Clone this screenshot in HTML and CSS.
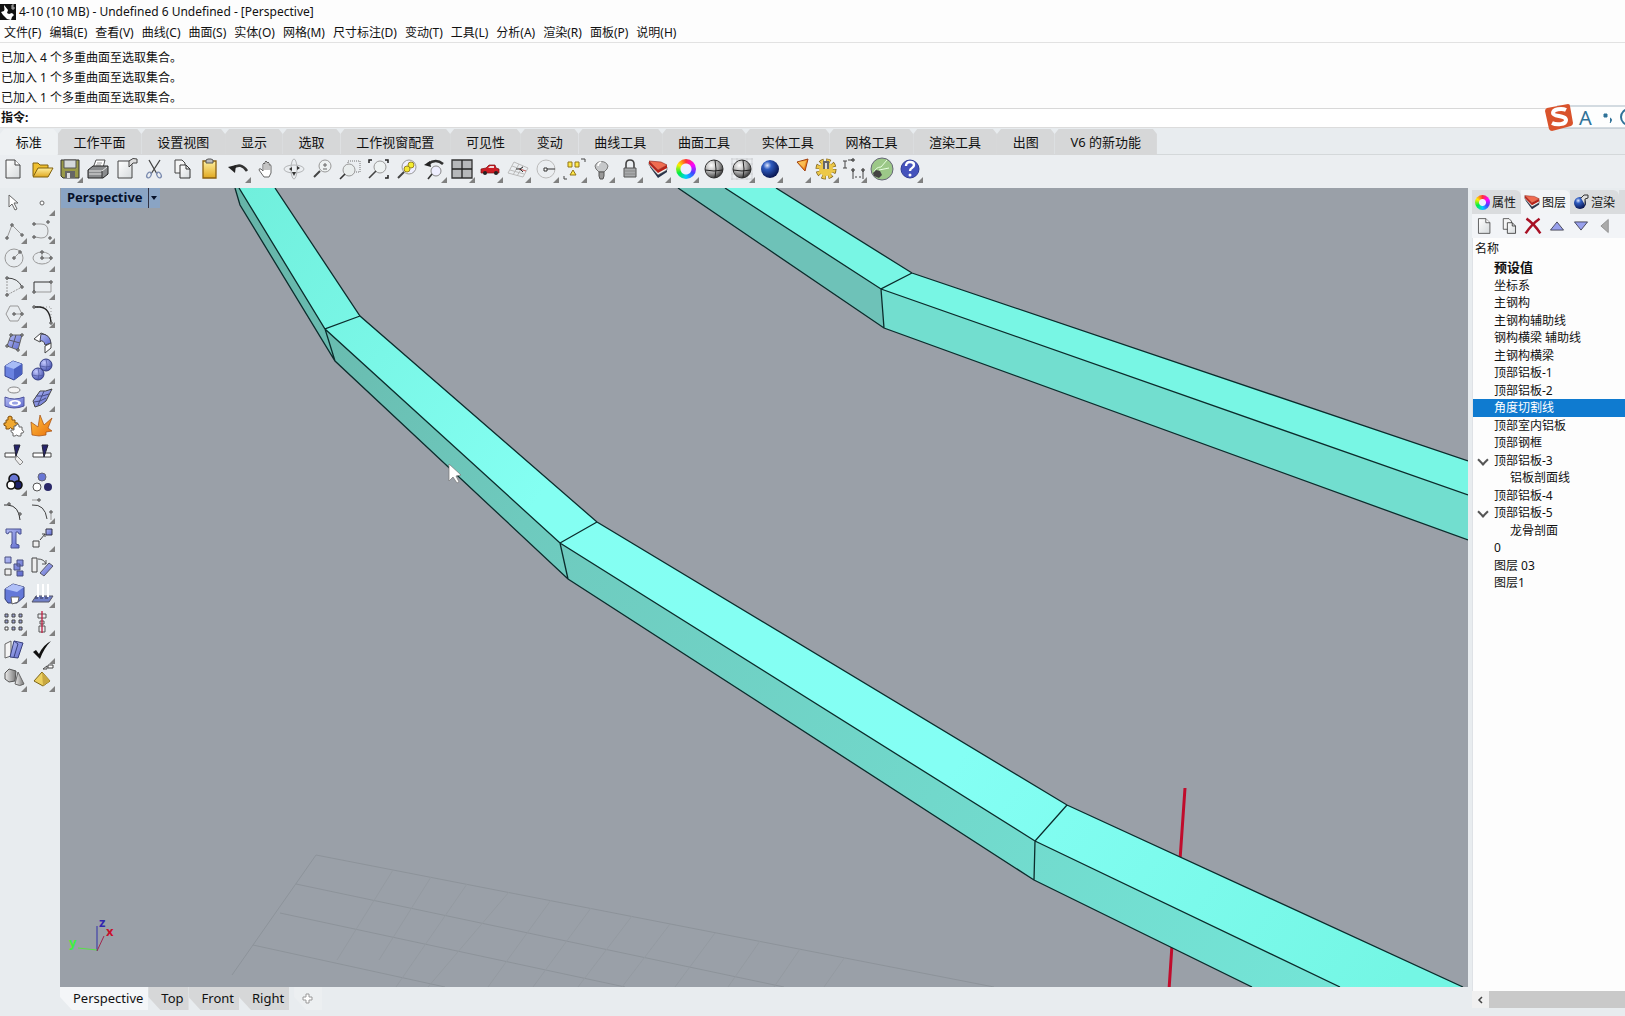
FILE: index.html
```html
<!DOCTYPE html>
<html lang="zh-CN">
<head>
  <meta charset="UTF-8" />
  <meta name="viewport" content="width=device-width, initial-scale=1.0"/>
  <title>4-10 (10 MB) - Undefined 6 Undefined - [Perspective]</title>
  <link rel="stylesheet" href="styles.css">
</head>

<body>
  <!-- shared gradients and symbols -->
  <svg class="defs" aria-hidden="true">
    <defs>
      <linearGradient id="blue" x1="0" y1="0" x2="1" y2="1"><stop offset="0" stop-color="#b4bcf4"/><stop offset="1" stop-color="#5c68cc"/></linearGradient>
      <linearGradient id="paper" x1="0" y1="0" x2="1" y2="1"><stop offset="0" stop-color="#fff"/><stop offset="1" stop-color="#d6dadc"/></linearGradient>
      <linearGradient id="gold" x1="0" y1="0" x2="0" y2="1"><stop offset="0" stop-color="#fff0a0"/><stop offset="1" stop-color="#e0a820"/></linearGradient>
      <linearGradient id="orange" x1="0" y1="0" x2="1" y2="1"><stop offset="0" stop-color="#ffc040"/><stop offset="1" stop-color="#e8700c"/></linearGradient>
      <linearGradient id="metal" x1="0" y1="0" x2="1" y2="0"><stop offset="0" stop-color="#eee"/><stop offset="1" stop-color="#777"/></linearGradient>
      <radialGradient id="ballGrey" cx=".35" cy=".3" r=".8"><stop offset="0" stop-color="#fff"/><stop offset=".5" stop-color="#aaa"/><stop offset="1" stop-color="#222"/></radialGradient>
      <radialGradient id="ballBlue" cx=".35" cy=".3" r=".75"><stop offset="0" stop-color="#dfe8ff"/><stop offset=".3" stop-color="#2f5cc0"/><stop offset="1" stop-color="#061048"/></radialGradient>
      <radialGradient id="ballSoft" cx=".35" cy=".3" r=".8"><stop offset="0" stop-color="#c4caff"/><stop offset="1" stop-color="#3c48a8"/></radialGradient>
    </defs>
    <symbol id="i-new" viewBox="0 0 28 28"><path d="M6 5h9l5 5v13H6z" fill="url(#paper)" stroke="#444"/><path d="M15 5v5h5" fill="#fff" stroke="#444"/></symbol>
    <symbol id="i-copy" viewBox="0 0 28 28"><path d="M7 5h7l3 3v10H7z" fill="#f5f5f5" stroke="#444"/><path d="M12 10h6l4 4v9H12z" fill="url(#paper)" stroke="#333"/><path d="M18 10v4h4" fill="none" stroke="#333"/></symbol>
    <symbol id="i-layers" viewBox="0 0 28 28"><path d="M6 12l8 11 9-6v-4l-9 5-8-8z" fill="#28334a"/><path d="M5 10l9 10 9-5v-3l-9 4-9-9z" fill="#f4f4f4" stroke="#555" stroke-width=".6"/><path d="M5 6l9 9 9-5v3l-9 5-9-9z" fill="#b82218"/><path d="M5 6l12 1 6 3-9 5z" fill="#f06c50" stroke="#8a2018" stroke-width=".6"/></symbol>
    <symbol id="i-ball" viewBox="0 0 28 28"><circle cx="14" cy="14" r="9" fill="url(#ballGrey)" stroke="#333"/><path d="M5 15q9 2 18 0M15 5q2 9 0 18" stroke="#222" fill="none"/></symbol>
  </svg>

  <header class="titlebar">
    <svg class="logo" viewBox="0 0 16 16"><path d="M0 0h16v16H0z" fill="#111"/><path d="M4 1c0 3 1 4 0 6l-3 1 2 3 4 4 4 1 1-3 2-2-2-2-3 1-2-1 1-3z" fill="#fff"/><path d="M14 1h-2v4h2V3h-2" fill="none" stroke="#ddd" stroke-width=".8"/></svg>
    <h1>4-10 (10 MB) - Undefined 6 Undefined - [Perspective]</h1>
  </header>

  <nav class="menu">
    <button>文件(F)</button>
    <button>编辑(E)</button>
    <button>查看(V)</button>
    <button>曲线(C)</button>
    <button>曲面(S)</button>
    <button>实体(O)</button>
    <button>网格(M)</button>
    <button>尺寸标注(D)</button>
    <button>变动(T)</button>
    <button>工具(L)</button>
    <button>分析(A)</button>
    <button>渲染(R)</button>
    <button>面板(P)</button>
    <button>说明(H)</button>
  </nav>

  <section class="log">
    <p>已加入 4 个多重曲面至选取集合。</p>
    <p>已加入 1 个多重曲面至选取集合。</p>
    <p>已加入 1 个多重曲面至选取集合。</p>
  </section>

  <div class="command">
    <label for="cmd">指令:</label>
    <input type="text" id="cmd">
    <!-- input method bar -->
    <div class="ime">
      <svg viewBox="0 0 80 30">
        <path d="M12 4h70v22H12" fill="#fdfefe" stroke="#a9b8c4"/>
        <path d="M2 6l21-4q2 0 2 2l3 17q0 2-2 3L7 29q-2 0-3-2L0 9q0-2 2-3z" fill="#d9532c"/>
        <path d="M21 8c-4-2-13-1-13 3s13 2 13 7-10 5-14 3" fill="none" stroke="#fff" stroke-width="4"/>
        <path d="M59 12h3v3h-3zM65 16q3 1 0 5" fill="#2f7298" stroke="#2f7298"/>
        <circle cx="84" cy="15" r="8" fill="none" stroke="#2f7298" stroke-width="2"/>
      </svg>
      <span>A</span>
    </div>
  </div>

  <nav class="tabs">
    <div class="tab-list">
      <button class="active">标准</button>
      <button>工作平面</button>
      <button>设置视图</button>
      <button>显示</button>
      <button>选取</button>
      <button>工作视窗配置</button>
      <button>可见性</button>
      <button>变动</button>
      <button>曲线工具</button>
      <button>曲面工具</button>
      <button>实体工具</button>
      <button>网格工具</button>
      <button>渲染工具</button>
      <button>出图</button>
      <button>V6 的新功能</button>
    </div>
  </nav>

  <div class="toolbar">
    <button class="tool" aria-label="新建"><svg viewBox="0 0 28 28"><use href="#i-new"/></svg></button>
    <button class="tool" aria-label="打开"><svg viewBox="0 0 28 28"><path d="M5 21V8h5l2 2h8v4" fill="#f0c030" stroke="#80600c"/><path d="M5 22l5-9h15l-5 9z" fill="url(#gold)" stroke="#80600c"/></svg></button>
    <button class="tool more" aria-label="保存"><svg viewBox="0 0 28 28"><path d="M5 5h18v18H7l-2-2z" fill="#9a9a48" stroke="#333"/><path d="M8 5h12v8H8z" fill="#d4d8da" stroke="#555"/><path d="M9 16h10v7H9z" fill="#666"/><path d="M11 18h3v5h-3z" fill="#ddd"/></svg></button>
    <button class="tool" aria-label="打印"><svg viewBox="0 0 28 28"><path d="M9 13l3-8h9l-2 8z" fill="#fff" stroke="#555"/><path d="M13 8h5M12 10h5" stroke="#999"/><path d="M4 15l5-4h15v8l-5 4H4z" fill="#8a8c8e" stroke="#222"/><path d="M5 16h13l5-4M5 19h13" fill="none" stroke="#e4e4e4"/><path d="M18 16v7" stroke="#333"/></svg></button>
    <button class="tool" aria-label="文件属性"><svg viewBox="0 0 28 28"><path d="M6 6h13l1 4v13H6z" fill="url(#paper)" stroke="#444"/><path d="M17 6q4-4 8-2v4h-4l-4 4z" fill="#ddd" stroke="#444"/></svg></button>
    <button class="tool" aria-label="剪切"><svg viewBox="0 0 28 28"><path d="M9 5l8 14M20 5l-9 14" stroke="#444" stroke-width="1.3"/><ellipse cx="9" cy="20" rx="2" ry="3" transform="rotate(30 9 20)" fill="none" stroke="#7c8cb0" stroke-width="1.3"/><ellipse cx="19" cy="20" rx="2" ry="3" transform="rotate(-30 19 20)" fill="none" stroke="#7c8cb0" stroke-width="1.3"/></svg></button>
    <button class="tool" aria-label="复制"><svg viewBox="0 0 28 28"><use href="#i-copy"/></svg></button>
    <button class="tool" aria-label="粘贴"><svg viewBox="0 0 28 28"><path d="M7 6h13v17H7z" fill="url(#gold)" stroke="#8a6010" stroke-width="1.3"/><path d="M10 8V5l2-1h3l2 1v3z" fill="#bbb" stroke="#555"/></svg></button>
    <button class="tool more" aria-label="撤销"><svg viewBox="0 0 28 28"><path d="M9 13q8-6 14 3" fill="none" stroke="#333" stroke-width="2.6"/><path d="M4 12l8-2-1 8z" fill="#222"/></svg></button>
    <button class="tool" aria-label="平移"><svg viewBox="0 0 28 28"><path d="M12 22l-5-7q0-2 2-1l2 2V9q1-2 2 0V7q1-2 2 0v1q1-2 2 0v2q2-1 2 1v7l-2 4z" fill="#fff" stroke="#666"/><path d="M13 9v6M15 8v7M17 10v5" stroke="#888"/></svg></button>
    <button class="tool" aria-label="旋转视图"><svg viewBox="0 0 28 28"><ellipse cx="14" cy="14" rx="10" ry="4" fill="none" stroke="#b4b6b8"/><ellipse cx="14" cy="14" rx="3" ry="10" fill="none" stroke="#b4b6b8"/><path d="M9 14l3-2v4zM20 13l-3-2v4zM12 17h4l-2 4z" fill="#333"/></svg></button>
    <button class="tool" aria-label="缩放"><svg viewBox="0 0 28 28"><circle cx="17" cy="11" r="6" fill="#eef2f2" stroke="#999"/><path d="M12 16l-6 6" stroke="#444" stroke-width="2"/><path d="M15 10h4M17 8v4M15 14h4" stroke="#666"/></svg></button>
    <button class="tool" aria-label="框选缩放"><svg viewBox="0 0 28 28"><path d="M12 6h12v11H12z" fill="none" stroke="#777" stroke-dasharray="1 1"/><circle cx="13" cy="15" r="6" fill="#e9eded" stroke="#999"/><path d="M9 19l-5 5" stroke="#333" stroke-width="1.6"/></svg></button>
    <button class="tool" aria-label="缩放至最大范围"><svg viewBox="0 0 28 28"><path d="M5 8V5h3M21 5h3v3M24 20v3h-3" fill="none" stroke="#222" stroke-width="1.5"/><circle cx="16" cy="12" r="6" fill="#eef2f2" stroke="#999"/><path d="M12 16l-7 7" stroke="#444" stroke-width="1.6"/></svg></button>
    <button class="tool" aria-label="缩放至选取物件"><svg viewBox="0 0 28 28"><circle cx="17" cy="12" r="7" fill="#eef" stroke="#999"/><path d="M12 17l-6 6" stroke="#444" stroke-width="2"/><circle cx="19" cy="10" r="3" fill="#f4ee30" stroke="#988420"/><circle cx="15" cy="14" r="3" fill="#f4e830" stroke="#988420"/></svg></button>
    <button class="tool more" aria-label="恢复视图"><svg viewBox="0 0 28 28"><path d="M8 9q8-6 15 0" fill="none" stroke="#333" stroke-width="2.6"/><path d="M4 10l6-4 1 6z" fill="#222"/><circle cx="16" cy="16" r="5" fill="#eef" stroke="#888"/><path d="M12 19l-4 5" stroke="#333" stroke-width="1.6"/></svg></button>
    <button class="tool more" aria-label="四个视图"><svg viewBox="0 0 28 28"><path d="M4 5h20v18H4z" fill="#b6b8ba" stroke="#333" stroke-width="1.3"/><path d="M14 5v18M4 14h20" stroke="#222" stroke-width="1.3"/></svg></button>
    <button class="tool more" aria-label="汽车视图"><svg viewBox="0 0 28 28"><path d="M5 14l5-1 3-3h6l1 3 3 1v4H5z" fill="#cc1c24" stroke="#7c0c10" stroke-width=".7"/><path d="M12 13l2-2h4v2z" fill="#f0d8d8"/><circle cx="9" cy="18" r="2" fill="#222"/><circle cx="20" cy="18" r="2" fill="#222"/></svg></button>
    <button class="tool more" aria-label="工作平面"><svg viewBox="0 0 28 28"><path d="M10 7l14 6-5 9-15-4zM8 11l14 5M6 15l14 4M15 9l-6 11M19 11l-6 10" fill="none" stroke="#bbb"/><path d="M15 14l7 2" stroke="#c66"/><path d="M12 14h4l3 3M16 14l3-2" fill="none" stroke="#333"/></svg></button>
    <button class="tool more" aria-label="圆"><svg viewBox="0 0 28 28"><circle cx="14" cy="14" r="9" fill="none" stroke="#bbb"/><path d="M14 14h9" stroke="#333"/><path d="M12 13h3v3h-3z" fill="#fff" stroke="#333"/></svg></button>
    <button class="tool more" aria-label="选取"><svg viewBox="0 0 28 28"><path d="M8 7h4v5H8zM15 7h4v5h-4zM13 15l3 5h-6z" fill="#ffe848" stroke="#907418"/><path d="M21 4h4v3M4 21v3h3" fill="none" stroke="#444"/></svg></button>
    <button class="tool more" aria-label="隐藏"><svg viewBox="0 0 28 28"><path d="M11 17q-4-3-4-6a7 7 0 0 1 13 0q0 3-4 6z" fill="#c6c8ca" stroke="#777"/><path d="M11 17h5v4l-1 3h-3l-1-3z" fill="#999" stroke="#555"/><path d="M10 11q0-3 3-4" fill="none" stroke="#fff" stroke-width="1.5"/></svg></button>
    <button class="tool more" aria-label="锁定"><svg viewBox="0 0 28 28"><path d="M10 13V9q0-4 4-4t4 4v4" fill="none" stroke="#444" stroke-width="1.6"/><path d="M8 13h12v9H8z" fill="#a8aaac" stroke="#555"/><path d="M9 16h10M9 19h10" stroke="#888"/></svg></button>
    <button class="tool more" aria-label="图层"><svg viewBox="0 0 28 28"><use href="#i-layers"/></svg></button>
    <button class="tool more" aria-label="属性"><span class="wheel"></span></button>
    <button class="tool" aria-label="着色"><svg viewBox="0 0 28 28"><use href="#i-ball"/></svg></button>
    <button class="tool more" aria-label="着色全部"><svg viewBox="0 0 28 28"><path d="M3 4h22M3 9h22M3 19h22M3 24h22M4 3v22M9 3v22M19 3v22M24 3v22" stroke="#c4c6c8" stroke-width=".7"/><use href="#i-ball"/></svg></button>
    <button class="tool more" aria-label="渲染"><svg viewBox="0 0 28 28"><circle cx="14" cy="14" r="9" fill="url(#ballBlue)"/></svg></button>
    <button class="tool more" aria-label="聚光灯"><svg viewBox="0 0 28 28"><path d="M13 7l11-3-3 12z" fill="url(#orange)" stroke="#a04010"/><path d="M14 7l8-1-2 7" fill="#ffe080" opacity=".5"/></svg></button>
    <button class="tool more" aria-label="选项"><svg viewBox="0 0 28 28"><circle cx="14" cy="14" r="8" fill="none" stroke="#80641c" stroke-width="5" stroke-dasharray="4 2.28"/><circle cx="14" cy="14" r="8" fill="none" stroke="#ecc848" stroke-width="3.4" stroke-dasharray="3 3.28" stroke-dashoffset="-.5"/><circle cx="14" cy="14" r="7" fill="#ecc848"/><path d="M11 6h6v8h-6z" fill="#666"/><path d="M13 8h2v6h-2z" fill="#ddd"/></svg></button>
    <button class="tool more" aria-label="尺寸标注"><svg viewBox="0 0 28 28"><path d="M5 6v7M3 6h4M3 13h4M8 5h5M13 16v8M23 16v8M15 22h2M19 22h2" fill="none" stroke="#444"/><path d="M12 4h2v2h-2zM12 14h2v2h-2zM22 14h2v2h-2z" fill="#fff" stroke="#222"/></svg></button>
    <button class="tool" aria-label="Grasshopper"><svg viewBox="0 0 28 28"><circle cx="14" cy="14" r="11" fill="#9cc888" stroke="#667"/><path d="M6 17q2-5 7-5l6-7M11 15l10-2" fill="none" stroke="#e8ffe0"/><path d="M5 18l3-3 4 1 2 4-3 3-5-2z" fill="#444"/></svg></button>
    <button class="tool more" aria-label="说明"><svg viewBox="0 0 28 28"><circle cx="14" cy="14" r="9" fill="#4452bc" stroke="#303c94"/><path d="M10 11q0-4 4-4t4 3q0 2-2 3t-2 3" fill="none" stroke="#fff" stroke-width="2.4"/><circle cx="14" cy="20" r="1.5" fill="#fff"/></svg></button>
  </div>

  <main class="workspace">
    <aside class="side">
      <button class="tool" aria-label="取消"><svg viewBox="0 0 28 28"><path d="M9 7v12l3-3 3 6 2-1-3-6h4z" fill="#fff" stroke="#666"/></svg></button>
      <button class="tool more" aria-label="点"><svg viewBox="0 0 28 28"><circle cx="14" cy="15" r="2" fill="#fff" stroke="#666"/></svg></button>

      <button class="tool more" aria-label="多重直线"><svg viewBox="0 0 28 28"><path class="ln" d="M7 22l5-13 10 10"/><path class="pt" d="M6 21h2v2H6zM11 8h2v2h-2zM21 18h2v2h-2z"/></svg></button>
      <button class="tool more" aria-label="曲线"><svg viewBox="0 0 28 28"><path class="ln" d="M7 8h6q7 0 7 7t-7 7l-6-1"/><path class="pt" d="M5 7h2v2H5zM19 5h2v2h-2zM5 20h2v2H5zM21 21h2v2h-2z"/></svg></button>

      <button class="tool more" aria-label="圆"><svg viewBox="0 0 28 28"><circle class="ln" cx="14" cy="14" r="9"/><path class="ln" d="M14 14l6-6"/><path class="pt" d="M13 13h2v2h-2zM19 7h2v2h-2z"/></svg></button>
      <button class="tool more" aria-label="椭圆"><svg viewBox="0 0 28 28"><ellipse class="ln" cx="14" cy="14" rx="9" ry="6"/><path class="ln" d="M14 8v6h9"/><path class="pt" d="M13 13h2v2h-2zM13 7h2v2h-2zM22 13h2v2h-2z"/></svg></button>

      <button class="tool more" aria-label="圆弧"><svg viewBox="0 0 28 28"><path class="ln" d="M7 6v17l15-8" stroke-dasharray="2 1"/><path d="M7 6q11 0 15 9" fill="none" stroke="#444"/><path class="pt" d="M6 5h2v2H6zM6 22h2v2H6zM21 14h2v2h-2z"/></svg></button>
      <button class="tool more" aria-label="矩形"><svg viewBox="0 0 28 28"><path d="M6 20V10h17" fill="none" stroke="#333"/><path class="ln" d="M23 10v10H6"/><path class="pt" d="M5 19h2v2H5zM22 9h2v2h-2z"/></svg></button>

      <button class="tool more" aria-label="多边形"><svg viewBox="0 0 28 28"><path class="ln" d="M6 14l4-8h8l4 8-4 7h-8zM14 14h8"/><path class="pt" d="M13 13h2v2h-2zM21 13h2v2h-2z"/></svg></button>
      <button class="tool more" aria-label="圆角"><svg viewBox="0 0 28 28"><path class="ln" d="M6 7h17v16" stroke-dasharray="1 2"/><path d="M6 7h6q10 1 11 16" fill="none" stroke="#222" stroke-width="1.3"/><path class="pt" d="M5 6h2v2H5zM22 22h2v2h-2z"/></svg></button>

      <button class="tool more" aria-label="曲面"><svg viewBox="0 0 28 28"><path d="M11 7h11l-4 15-11-4z" fill="url(#blue)" stroke="#666"/><path d="M9 12l11 3M16 7l-4 13" stroke="#556"/><path class="pt" d="M10 6h2v2h-2zM21 6h2v2h-2zM6 17h2v2H6zM17 21h2v2h-2z"/></svg></button>
      <button class="tool more" aria-label="曲面圆角"><svg viewBox="0 0 28 28"><path d="M6 11l7-6 5 2-6 7z" fill="#fff" stroke="#444"/><path d="M13 6q9 0 10 9l-6 2q-1-5-5-4z" fill="url(#blue)" stroke="#445"/><path d="M17 18l6-3v5l-6 5z" fill="#fff" stroke="#444"/></svg></button>

      <button class="tool more" aria-label="立方体"><svg viewBox="0 0 28 28"><path d="M5 10l8-5 9 3v10l-8 6-9-4z" fill="#6a82e0" stroke="#33418e"/><path d="M5 10l8-5 9 3-8 5z" fill="#a8bcf6"/><path d="M14 13l8-5v10l-8 6z" fill="#4a60c0"/></svg></button>
      <button class="tool more" aria-label="布尔运算"><svg viewBox="0 0 28 28"><circle cx="18" cy="9" r="6" fill="url(#ballSoft)" stroke="#333c80"/><circle cx="10" cy="18" r="6" fill="url(#ballSoft)" stroke="#333c80"/><path d="M12 10q6 2 12 0M18 3q2 6 0 12M4 19q6 2 12 0M10 12q2 6 0 12" fill="none" stroke="#4a559c" stroke-width=".7"/></svg></button>

      <button class="tool more" aria-label="投影"><svg viewBox="0 0 28 28"><ellipse cx="14" cy="6" rx="6" ry="3" fill="#f4f4f4" stroke="#888"/><path d="M5 13q9 4 19 0v9q-10 4-19 0z" fill="url(#blue)" stroke="#4c529c"/><ellipse cx="15" cy="19" rx="6" ry="3" fill="#fff"/><ellipse cx="15" cy="19" rx="3" ry="1.5" fill="#98a2e4"/></svg></button>
      <button class="tool more" aria-label="网格"><svg viewBox="0 0 28 28"><path d="M5 17l7-10q5 1 12-2l-6 12q-5 5-11 6z" fill="url(#blue)" stroke="#444"/><path d="M8 12q6 1 13-2M6 18q6 0 12-4M16 7l-6 14" fill="none" stroke="#444a80"/></svg></button>

      <button class="tool" aria-label="组合"><svg viewBox="0 0 28 28"><path d="M6 8h2q-1-4 2-4t2 4h3v3q3-1 3 1t-3 2v3h-3q-1-3-3 0H6v-3q-3 0-2-3h2z" fill="#f0a830" stroke="#805010"/><path d="M14 14h2q0-3 3-1v2h3v3q3 1 1 3h-2v3h-3q-1-2-3 0h-2v-3q-3-1-2-3h3z" fill="#fff" stroke="#666"/></svg></button>
      <button class="tool" aria-label="炸开"><svg viewBox="0 0 28 28"><path d="M3 10l7 5 2-12 4 10 8-7-4 10 4 3-6 1v3l-7 1-7-1z" fill="url(#orange)" stroke="#a04c10" stroke-width=".7"/></svg></button>

      <button class="tool" aria-label="修剪"><svg viewBox="0 0 28 28"><path d="M5 13h11v4H5z" fill="#fff" stroke="#444"/><path d="M17 16l6 6-3 3-5-6z" fill="#eee" stroke="#888"/><path d="M14 5h6l-4 11z" fill="#26246c" stroke="#223"/></svg></button>
      <button class="tool" aria-label="分割"><svg viewBox="0 0 28 28"><path d="M5 13h18v4H5z" fill="#fff" stroke="#444"/><path d="M14 5h6l-4 12z" fill="#26246c" stroke="#223"/></svg></button>

      <button class="tool more" aria-label="群组"><svg viewBox="0 0 28 28"><circle cx="14" cy="11" r="5" fill="#6876d4" stroke="#111" stroke-width="1.6"/><circle cx="18" cy="17" r="4" fill="#1c2068" stroke="#111" stroke-width="1.6"/><circle cx="11" cy="17" r="4" fill="#fff" stroke="#111" stroke-width="1.6"/></svg></button>
      <button class="tool" aria-label="解散群组"><svg viewBox="0 0 28 28"><circle cx="14" cy="9" r="4" fill="#6876d4" stroke="#667"/><circle cx="20" cy="19" r="4" fill="#2a2868"/><circle cx="9" cy="19" r="4" fill="#fff" stroke="#555"/></svg></button>

      <button class="tool" aria-label="编辑点"><svg viewBox="0 0 28 28"><path d="M4 9h4q11 1 12 15" fill="none" stroke="#333"/><path class="pt" d="M8 7h2v2H8zM19 17h2v2h-2z"/></svg></button>
      <button class="tool more" aria-label="控制点"><svg viewBox="0 0 28 28"><path d="M4 9q13-1 15 14" fill="none" stroke="#444"/><path class="ln" d="M4 4h6M23 18v6"/><path class="pt" d="M10 3h2v2h-2zM22 15h2v2h-2z"/></svg></button>

      <button class="tool" aria-label="文字"><svg viewBox="0 0 28 28"><path d="M6 5h15v5h-2l-1-2h-2v12l3 1v3h-8v-3l1-1V8H9l-1 2-2-1z" fill="url(#blue)" stroke="#4a5290"/></svg></button>
      <button class="tool more" aria-label="移动"><svg viewBox="0 0 28 28"><path d="M12 16l5-6M14 10h3v3" fill="none" stroke="#444"/><path d="M5 17h6v6H5z" fill="#eee" stroke="#444"/><path d="M18 5h6v6h-6z" fill="url(#blue)" stroke="#334"/></svg></button>

      <button class="tool" aria-label="复制物件"><svg viewBox="0 0 28 28"><path d="M5 5h6v6H5zM17 8h6v6h-6zM14 12h6v6h-6zM17 19h6v5h-6z" fill="url(#blue)" stroke="#4a5080"/><path d="M5 17h6v6H5z" fill="#eee" stroke="#444"/></svg></button>
      <button class="tool" aria-label="旋转"><svg viewBox="0 0 28 28"><path d="M4 6h5v14H4z" fill="#eee" stroke="#444"/><path d="M10 7q6 0 8 5M18 8v4h-4" fill="none" stroke="#555"/><path d="M12 21l9-10 4 3-9 10z" fill="url(#blue)" stroke="#556"/></svg></button>

      <button class="tool more" aria-label="实体"><svg viewBox="0 0 28 28"><path d="M5 9l8-5 11 3v10l-7 6H8l-3-4z" fill="#6478d8" stroke="#333c70"/><path d="M5 9l8-5 11 3-7 5z" fill="#b0c0f8"/><path d="M11 17h8l-1 5-6 2z" fill="#fff" stroke="#666"/></svg></button>
      <button class="tool more" aria-label="曲面投影"><svg viewBox="0 0 28 28"><path d="M8 16h17l-4 6H4z" fill="#7080c8" stroke="#556"/><path d="M10 4v13M15 4v13M20 4v13" stroke="#fff" stroke-width="2"/><path d="M7 18h15" stroke="#335" stroke-dasharray="3 2"/></svg></button>

      <button class="tool more" aria-label="阵列"><svg viewBox="0 0 28 28"><path d="M5 6h3v3H5zM12 6h3v3h-3zM19 6h3v3h-3zM5 12h3v3H5zM12 12h3v3h-3zM19 12h3v3h-3zM12 19h3v3h-3zM19 19h3v3h-3z" fill="#98a0d0" stroke="#444"/><path d="M5 19h3v3H5z" fill="#fff" stroke="#444"/></svg></button>
      <button class="tool more" aria-label="对齐"><svg viewBox="0 0 28 28"><path d="M10 6h8v4h-8zM12 13h4v3h-4zM11 18h6v6h-6z" fill="none" stroke="#555"/><path d="M14 3v22" stroke="#c01c40" stroke-width="1.3"/></svg></button>

      <button class="tool more" aria-label="变形"><svg viewBox="0 0 28 28"><path d="M5 8l6-3v15l-6 2z" fill="#f4f4f4" stroke="#666"/><path d="M14 5l9 2-5 15-8-1z" fill="url(#blue)" stroke="#38407c"/><path d="M14 5l4 3-4 13" fill="none" stroke="#38407c"/></svg></button>
      <button class="tool more" aria-label="检查"><svg viewBox="0 0 28 28"><path d="M5 16l3-2 3 4q4-9 12-13-7 7-11 18z" fill="#111"/></svg></button>

      <button class="tool more" aria-label="图块"><svg viewBox="0 0 28 28"><path d="M5 9l4-4 7 2-1 10-6 1-4-3z" fill="url(#metal)" stroke="#555"/><path d="M18 8l6 12q-4 3-9 0z" fill="url(#metal)" stroke="#666"/></svg></button>
      <button class="tool more" aria-label="金字塔"><svg viewBox="0 0 28 28"><path d="M14 8l8 9-7 5-9-5z" fill="#ecd060" stroke="#7c6418"/><path d="M14 8l8 9-7 5z" fill="#c8a840"/><path d="M20 1h5v3h-5zM15 5l4-3v3z" fill="#fff" stroke="#444"/></svg></button>
    </aside>

    <section class="view">
      <div class="viewport">
        <svg class="scene" viewBox="60 188 1408 799" preserveAspectRatio="xMinYMin slice">
          <defs>
            <linearGradient id="top" gradientUnits="userSpaceOnUse" x1="240" y1="188" x2="1400" y2="987">
              <stop offset="0" stop-color="#70efdc"/><stop offset=".3" stop-color="#84fff2"/><stop offset=".65" stop-color="#84fff4"/><stop offset="1" stop-color="#74f6e4"/>
            </linearGradient>
            <linearGradient id="low" gradientUnits="userSpaceOnUse" x1="240" y1="188" x2="1400" y2="987">
              <stop offset="0" stop-color="#66b4a8"/><stop offset=".3" stop-color="#6ecabe"/><stop offset="1" stop-color="#74e6d8"/>
            </linearGradient>
          </defs>
          <!-- construction grid -->
          <path class="grid" d="M316 855L994 987M316 855L232 975M296 884L784 987M280 913L625 987M253 945L445 987"/>
          <path class="grid faint" d="M393 870L337 960M431 877L379 960M467 884L396 987M509 892L428 987M551 900L488 987M591 908L533 987M632 916L578 987M670 924L622 987M715 933L675 987M760 941L728 987M800 949L774 987M845 957L824 987"/>
          <path class="red" d="M1185 788L1180 860M1172 945L1169 990"/>

          <!-- rear beam -->
          <path fill="#6ec2b8" d="M678 188L725 188 881 289 884 328z"/>
          <path fill="#72decf" d="M881 289L1468 495V540L884 328z"/>
          <path fill="#78f6e4" d="M725 188H776L912 273 1468 461V495L881 289z"/>
          <path class="edge" d="M678 188L884 328 1468 540M725 188L881 289 1468 495M776 188L912 273 1468 461M912 273L881 289 884 328"/>

          <!-- front beam -->
          <path fill="url(#low)" d="M235 188L240 205 335 361 568 579 1034 880 1252 987H1340L1035 841 560 543 325 329 239 188z"/>
          <path fill="url(#top)" d="M239 188H275L360 316 597 522 1067 805 1463 987H1340L1035 841 560 543 325 329z"/>
          <path class="edge" d="M235 188L240 205 335 361 568 579 1034 880 1252 987M239 188L325 329 560 543 1035 841 1340 987M275 188L360 316 597 522 1067 805 1463 987M360 316L325 329 335 361M597 522L560 543 568 579M1067 805L1035 841 1034 880"/>

          <!-- axis -->
          <path d="M97 951V926" stroke="#3030a8"/>
          <path d="M97 951L104 936" stroke="#a02850"/>
          <path d="M97 950L78 948" stroke="#58e048"/>
          <text x="99" y="927" fill="#3026b0">z</text>
          <text x="106" y="936" fill="#c8102c">x</text>
          <text x="69" y="947" fill="#3cf03c">y</text>

          <path d="M449 464V481L453 477 457 483 459 482 456 476 461 475z" fill="#fff" stroke="#777" stroke-width=".7"/>
        </svg>
        <button class="view-name">Perspective<svg viewBox="0 0 12 20"><path d="M.5 0v20" stroke="#334"/><path d="M3 8h6l-3 4z" fill="#06112a"/></svg></button>
      </div>
      <nav class="view-tabs">
        <button class="active">Perspective</button>
        <button>Top</button>
        <button>Front</button>
        <button>Right</button>
        <button class="add" aria-label="新增"><svg viewBox="0 0 12 12"><path d="M4 1h3v3h3v3H7v3H4V7H1V4h3z" fill="#fff" stroke="#999"/></svg></button>
      </nav>
    </section>

    <aside class="panel">
      <nav class="panel-tabs">
        <button><span class="wheel"></span>属性</button>
        <button class="active"><svg viewBox="4 4 20 20"><use href="#i-layers" width="28" height="28"/></svg>图层</button>
        <button><svg viewBox="0 0 16 16"><circle cx="7" cy="9" r="6" fill="url(#ballBlue)"/><path d="M8 4l3-3h4v3l-3 1v6" fill="#ddd" stroke="#333"/></svg>渲染</button>
        <button aria-label="更多"></button>
      </nav>
      <div class="panel-tools">
        <button aria-label="新图层"><svg viewBox="3 3 22 22"><use href="#i-new" width="28" height="28"/></svg></button>
        <button aria-label="新子图层"><svg viewBox="3 3 22 22"><use href="#i-copy" width="28" height="28"/></svg></button>
        <button aria-label="删除"><svg viewBox="3 3 22 22"><path d="M6 5q9 6 17 18M22 5Q12 12 5 23" fill="none" stroke="#a81024" stroke-width="3"/></svg></button>
        <button aria-label="上移"><svg viewBox="3 3 22 22"><path d="M14 9l8 10H6z" fill="#98a0ec" stroke="#334"/></svg></button>
        <button aria-label="下移"><svg viewBox="3 3 22 22"><path d="M14 19l8-10H6z" fill="#98a0ec" stroke="#334"/></svg></button>
        <button aria-label="左移"><svg viewBox="3 3 22 22"><path d="M9 14l9-8v16z" fill="#aaa" stroke="#888"/></svg></button>
      </div>
      <div class="layers">
        <h2>名称</h2>
        <ul>
          <li class="current">预设值</li>
          <li>坐标系</li>
          <li>主钢构</li>
          <li>主钢构辅助线</li>
          <li>钢构横梁 辅助线</li>
          <li>主钢构横梁</li>
          <li>顶部铝板-1</li>
          <li>顶部铝板-2</li>
          <li class="selected">角度切割线</li>
          <li>顶部室内铝板</li>
          <li>顶部钢框</li>
          <li class="open">顶部铝板-3</li>
          <li class="child">铝板剖面线</li>
          <li>顶部铝板-4</li>
          <li class="open">顶部铝板-5</li>
          <li class="child">龙骨剖面</li>
          <li>0</li>
          <li>图层 03</li>
          <li>图层1</li>
        </ul>
      </div>
      <div class="scrollbar">
        <button aria-label="向左滚动"><svg viewBox="0 0 16 16"><path d="M10 5L7 8l3 3" fill="none" stroke="#444" stroke-width="1.5"/></svg></button>
        <div class="thumb"></div>
      </div>
    </aside>
  </main>
</body>
</html>
```

FILE: styles.css
```css
* {
  box-sizing: border-box;
}

body {
  margin: 0;
  height: 100vh;
  display: flex;
  flex-direction: column;
  overflow: hidden;
  background: #e8ecef;
  color: #111;
  font-family: "Noto Sans", "Noto Sans CJK SC", sans-serif;
  font-size: 12px;
}

button {
  margin: 0;
  padding: 0;
  border: none;
  background: none;
  color: inherit;
  font: inherit;
  white-space: nowrap;
}

svg {
  display: block;
}

.defs {
  position: absolute;
  width: 0;
  height: 0;
}

/* title and menu */
.titlebar {
  display: flex;
  align-items: center;
  gap: 3px;
  height: 23px;
  flex: none;
  background: #fdfdfd;
}

.titlebar h1 {
  margin: 0;
  font-size: 12px;
  font-weight: normal;
}

.logo {
  width: 16px;
  height: 16px;
}

.menu {
  display: flex;
  gap: 8px;
  flex: none;
  height: 20px;
  padding: 0 0 2px 4px;
  background: #fdfdfd;
  border-bottom: 1px solid #e2e2e2;
}

/* command area */
.log {
  flex: none;
  padding: 5px 1px 0;
  background: #fdfdfd;
  line-height: 20px;
}

.log p {
  margin: 0;
}

.command {
  position: relative;
  display: flex;
  align-items: center;
  flex: none;
  height: 19px;
  padding: 0 0 2px 1px;
  background: #fff;
  border-top: 1px solid #d8d8d8;
  font-weight: bold;
}

.command input {
  flex: 1;
  border: none;
  outline: none;
  background: none;
  font: inherit;
}

.ime {
  position: absolute;
  right: 0;
  top: -7px;
  z-index: 2;
}

.ime svg {
  width: 80px;
  height: 30px;
}

.ime span {
  position: absolute;
  left: 34px;
  top: 4px;
  color: #2f7298;
  font-size: 20px;
  font-weight: normal;
  line-height: 24px;
}

/* toolbar tabs */
.tabs {
  flex: none;
  height: 28px;
  padding-top: 1px;
  border-top: 1px solid #dcdcdc;
  border-bottom: 1px solid #d4d8da;
}

.tab-list {
  display: flex;
  max-width: 1157px;
  height: 26px;
}

.tab-list button {
  flex: 1 0 auto;
  padding: 0 14px 2px;
  background: #d6d7d8;
  clip-path: polygon(0 0, calc(100% - 4px) 0, 100% 5px, 100% 100%, 0 100%, 0 5px, 4px 0);
  font-size: 13px;
}

.tab-list .active {
  background: #eef1f3;
}

.toolbar {
  display: flex;
  flex: none;
  height: 33px;
  background: #ebeef1;
}

.tool {
  position: relative;
  width: 28px;
  height: 28px;
}

.tool svg {
  width: 28px;
  height: 28px;
}

.more::after {
  content: "";
  position: absolute;
  right: 1px;
  bottom: 0;
  width: 6px;
  height: 6px;
  background: #808080;
  clip-path: polygon(100% 0, 100% 100%, 0 100%);
}

.wheel {
  display: block;
  width: 20px;
  height: 20px;
  margin: auto;
  border-radius: 50%;
  background: radial-gradient(circle, #eef 0 5px, transparent 6px), conic-gradient(#f33, #f0f, #44f, #0cf, #0e4, #fe0, #f33);
}

/* work area */
.workspace {
  display: grid;
  grid-template-columns: 60px 1fr 153px;
  column-gap: 4px;
  flex: 1;
  min-height: 0;
}

.side {
  display: grid;
  grid-template-columns: 28px 28px;
  grid-auto-rows: 28px;
  align-content: start;
  margin-right: -4px;
}

.ln {
  fill: none;
  stroke: #999;
}

.pt {
  fill: #fff;
  stroke: #444;
}

.view {
  display: flex;
  flex-direction: column;
  min-width: 0;
  margin-left: -4px;
}

.viewport {
  position: relative;
  flex: 1;
  min-height: 0;
  background: #9aa0a8;
}

.scene {
  width: 100%;
  height: 100%;
}

.scene text {
  font-size: 13px;
  font-weight: bold;
}

.edge {
  fill: none;
  stroke: #0b2c2c;
  stroke-width: 1.3;
}

.grid {
  fill: none;
  stroke: #8d939a;
}

.faint {
  stroke: #949aa1;
}

.red {
  stroke: #c00c2c;
  stroke-width: 3;
}

.view-name {
  position: absolute;
  left: 1px;
  top: 0;
  display: flex;
  gap: 5px;
  height: 20px;
  padding-left: 6px;
  background: #8aa4c4;
  color: #06112a;
  font-size: 13px;
  font-weight: bold;
  line-height: 18px;
}

.view-name svg {
  width: 12px;
  height: 20px;
}

.view-tabs {
  display: flex;
  flex: none;
  height: 29px;
  padding-bottom: 6px;
}

.view-tabs button {
  padding: 0 5px 1px 13px;
  background: #d6d7d8;
  clip-path: polygon(0 0, 100% 0, 100% 100%, 12px 100%, 0 10px);
  font-size: 13px;
}

.view-tabs .active {
  background: #f4f6f8;
}

.view-tabs .add {
  margin-left: 5px;
  padding: 0 8px;
  background: #eceff1;
}

.add svg {
  width: 12px;
  height: 12px;
}

/* layer panel */
.panel {
  display: flex;
  flex-direction: column;
  min-width: 0;
  overflow: hidden;
  padding: 2px 0 8px;
}

.panel-tabs {
  display: flex;
  height: 24px;
}

.panel-tabs button {
  display: flex;
  align-items: center;
  gap: 2px;
  flex: 0 0 49px;
  padding-left: 3px;
  background: #dadcde;
  border-radius: 0 6px 0 0;
}

.panel-tabs .active {
  background: #f2f4f6;
}

.panel-tabs svg {
  width: 16px;
  height: 16px;
}

.panel-tabs .wheel {
  width: 15px;
  height: 15px;
  margin: 0;
  background: radial-gradient(circle, #eef 0 3px, transparent 4px), conic-gradient(#f33, #f0f, #44f, #0cf, #0e4, #fe0, #f33);
}

.panel-tools {
  display: flex;
  height: 24px;
  padding-left: 1px;
  background: #f2f4f7;
}

.panel-tools button {
  flex: 0 0 24px;
}

.panel-tools svg {
  width: 18px;
  height: 18px;
  margin: auto;
}

.layers {
  flex: 1;
  background: #fdfdfd;
  border-left: 1px solid #dfe2e6;
}

.layers h2 {
  margin: 0;
  padding: 1px 0 0 2px;
  font-size: 12px;
  font-weight: normal;
  line-height: 20px;
}

.layers ul {
  display: grid;
  grid-auto-rows: 1fr;
  height: 333px;
  margin: 0;
  padding: 0;
  list-style: none;
  line-height: 17px;
}

.layers li {
  position: relative;
  padding-left: 21px;
  white-space: nowrap;
}

.layers .current {
  font-weight: bold;
  font-size: 13px;
}

.layers .selected {
  background: #0f7bd0;
  color: #fff;
}

.layers .child {
  padding-left: 37px;
}

.open::before {
  content: "";
  position: absolute;
  left: 6px;
  top: 4px;
  width: 6px;
  height: 6px;
  border: solid #555;
  border-width: 0 2px 2px 0;
  transform: rotate(45deg);
}

.scrollbar {
  display: flex;
  height: 17px;
  background: #f0f0f0;
}

.scrollbar button {
  width: 17px;
}

.scrollbar svg {
  width: 16px;
  height: 16px;
}

.thumb {
  flex: 1;
  background: #c9c9c9;
}
```
